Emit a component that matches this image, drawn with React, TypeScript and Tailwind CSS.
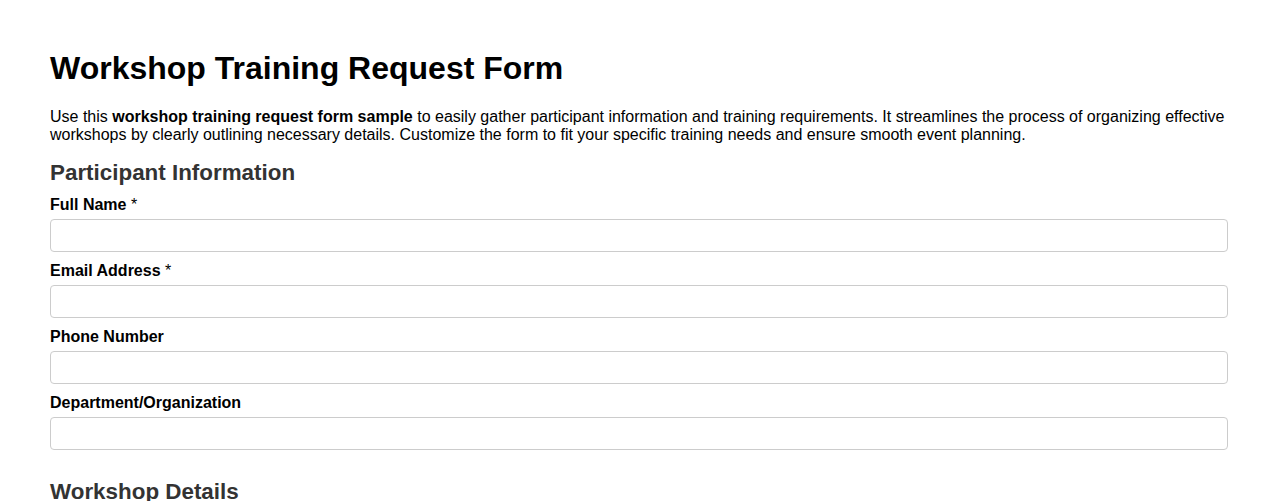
import React from "react";

type Field = {
  label: string;
  required?: boolean;
  type?: string;
};

const participantFields: Field[] = [
  { label: "Full Name", required: true },
  { label: "Email Address", required: true, type: "email" },
  { label: "Phone Number", type: "tel" },
  { label: "Department/Organization" },
];

const FormField: React.FC<{ field: Field }> = ({ field }) => (
  <div className="mb-[10px]">
    <label className="block font-bold text-[16px] leading-[18px] text-black mb-[5px]">
      {field.label}
      {field.required && <span className="font-normal"> *</span>}
    </label>
    <input
      type={field.type ?? "text"}
      className="block w-full h-[33px] border border-[#cccccc] rounded-[4px] px-2 bg-white outline-none"
    />
  </div>
);

export default function App() {
  return (
    <div className="min-h-screen bg-white px-[50px] pt-[50px] font-['Liberation_Sans',Arial,sans-serif] text-black">
      <h1 className="text-[32px] leading-[37px] font-bold text-black">
        Workshop Training Request Form
      </h1>
      <p className="mt-[21px] text-[16px] leading-[18px]">
        Use this <strong>workshop training request form sample</strong> to easily gather participant
        information and training requirements. It streamlines the process of organizing effective
        workshops by clearly outlining necessary details. Customize the form to fit your specific
        training needs and ensure smooth event planning.
      </p>

      {/* Participant section */}
      <section className="mt-[16px]">
        <h2 className="text-[22.4px] leading-[26px] font-bold text-[#333333] mb-[10px]">
          Participant Information
        </h2>
        {participantFields.map((f) => (
          <FormField key={f.label} field={f} />
        ))}
      </section>

      <section className="mt-[29px]">
        <h2 className="text-[22.4px] leading-[26px] font-bold text-[#333333] mb-[10px]">
          Workshop Details
        </h2>
      </section>
    </div>
  );
}
